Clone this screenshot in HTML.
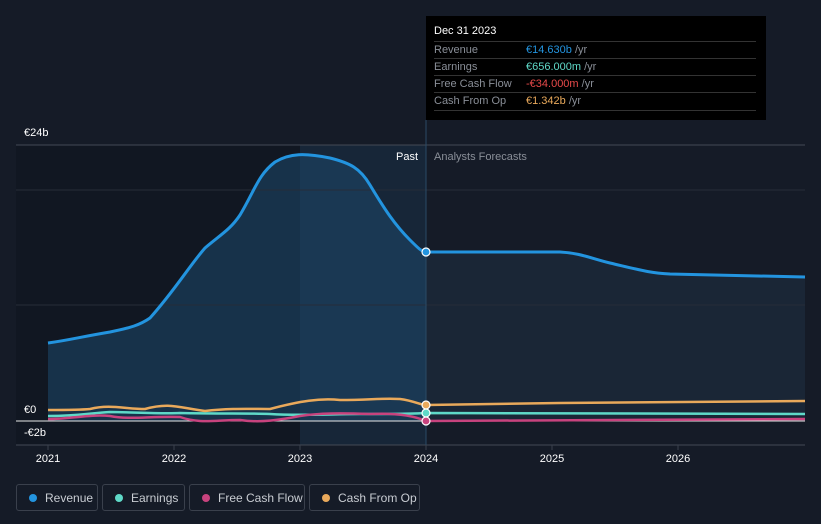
<!DOCTYPE html>
<html><head><meta charset="utf-8"><style>
body{margin:0;background:#151b27;font-family:"Liberation Sans",sans-serif;}
.wrap{position:relative;width:821px;height:524px;overflow:hidden;background:#151b27}
.tt{position:absolute;left:426px;top:16px;width:340px;height:104px;background:#000;color:#fff;font-size:11px}
.tt .h{position:absolute;left:8px;top:9px;font-size:11px}
.tt .r{position:absolute;left:8px;width:322px;border-top:1px solid #333;height:17px;line-height:17px;color:#8a8f98}
.tt .r span{position:absolute;left:92px}
.leg{position:absolute;top:484px;height:27px;border:1px solid #3a404c;border-radius:3px;color:#c8ccd2;font-size:12px;line-height:27px;box-sizing:border-box}
.leg i{position:absolute;left:12px;top:9px;width:8px;height:8px;border-radius:50%}
.leg b{font-weight:normal;position:absolute;left:28px}
</style></head><body><div class="wrap">
<svg width="821" height="524" style="position:absolute;left:0;top:0">
<rect x="16" y="145" width="284" height="300" fill="#111722"/>
<rect x="300" y="145" width="126" height="300" fill="#172638"/>
<path d="M48,343 C70,340 80,337 110,332 C130,328 140,325 150,318 C175,290 190,265 205,248 C220,235 230,230 240,215 C255,190 258,175 275,162 C290,153 305,153 330,158 C350,163 360,168 370,185 C385,210 395,225 410,240 C418,248 422,252 426,252 L426,421 L48,421 Z" fill="#1c4466" opacity="0.6"/>
<path d="M426,252 L560,252 C580,253 590,258 610,263 C640,270 650,273 670,274 L805,277 L805,421 L426,421 Z" fill="#1a2636"/>
<line x1="16" y1="145" x2="805" y2="145" stroke="#444a55"/>
<line x1="16" y1="190" x2="805" y2="190" stroke="#262c38"/>
<line x1="16" y1="305" x2="805" y2="305" stroke="#262c38"/>
<line x1="16" y1="445" x2="805" y2="445" stroke="#444a55"/>
<line x1="426" y1="120" x2="426" y2="445" stroke="#2a4a66"/>
<path d="M48,343 C70,340 80,337 110,332 C130,328 140,325 150,318 C175,290 190,265 205,248 C220,235 230,230 240,215 C255,190 258,175 275,162 C290,153 305,153 330,158 C350,163 360,168 370,185 C385,210 395,225 410,240 C418,248 422,252 426,252 L560,252 C580,253 590,258 610,263 C640,270 650,273 670,274 L805,277" fill="none" stroke="#2394df" stroke-width="3"/>
<line x1="16" y1="421" x2="805" y2="421" stroke="#e8e8e8" stroke-width="1"/>
<path d="M48,416 C80,416 90,413 110,412 C130,412 160,414 180,413 C220,414 250,413 270,414 C300,416 330,414 360,414 C390,414 410,414 426,413 L805,414" fill="none" stroke="#5fd9c8" stroke-width="2.5"/>
<path d="M48,419 C70,419 90,414 110,416 C130,420 150,416 180,417 C200,424 215,420 240,420 C260,423 280,420 300,416 C320,413 340,413 370,414 C390,413 410,414 426,421 L805,419" fill="none" stroke="#c8437e" stroke-width="2.5"/>
<path d="M48,410 C70,410 80,410 90,409 C110,404 125,409 145,409 C170,402 180,408 205,411 C230,408 250,409 270,409 C300,401 320,398 340,400 C370,400 380,398 400,399 C415,401 420,405 426,405 L560,403 L805,401" fill="none" stroke="#e9a95b" stroke-width="2.5"/>
<circle cx="426" cy="252" r="4" fill="#2394df" stroke="#fff" stroke-width="1.2"/>
<circle cx="426" cy="405" r="4" fill="#e9a95b" stroke="#fff" stroke-width="1.2"/>
<circle cx="426" cy="413" r="4" fill="#5fd9c8" stroke="#fff" stroke-width="1.2"/>
<circle cx="426" cy="421" r="4" fill="#c8437e" stroke="#fff" stroke-width="1.2"/>
<g stroke="#3a404c"><line x1="48" y1="445" x2="48" y2="450"/><line x1="174" y1="445" x2="174" y2="450"/><line x1="300" y1="445" x2="300" y2="450"/><line x1="426" y1="445" x2="426" y2="450"/><line x1="552" y1="445" x2="552" y2="450"/><line x1="678" y1="445" x2="678" y2="450"/></g>
<g font-family="Liberation Sans" font-size="11" fill="#fff">
<text x="24" y="136">€24b</text><text x="24" y="413">€0</text><text x="24" y="436">-€2b</text>
<g text-anchor="middle"><text x="48" y="462">2021</text><text x="174" y="462">2022</text><text x="300" y="462">2023</text><text x="426" y="462">2024</text><text x="552" y="462">2025</text><text x="678" y="462">2026</text></g>
<text x="418" y="160" text-anchor="end">Past</text>
<text x="434" y="160" fill="#8a8f98">Analysts Forecasts</text>
</g>
</svg>
<div class="tt"><div class="h">Dec 31 2023</div>
<div class="r" style="top:25px">Revenue<span style="color:#2394df">€14.630b <span style="position:static;color:#8a8f98">/yr</span></span></div>
<div class="r" style="top:42px">Earnings<span style="color:#5fd9c8">€656.000m <span style="position:static;color:#8a8f98">/yr</span></span></div>
<div class="r" style="top:59px">Free Cash Flow<span style="color:#e84a4a">-€34.000m <span style="position:static;color:#8a8f98">/yr</span></span></div>
<div class="r" style="top:76px;border-bottom:1px solid #333">Cash From Op<span style="color:#e9a95b">€1.342b <span style="position:static;color:#8a8f98">/yr</span></span></div>
</div>
<div class="leg" style="left:16px;width:82px"><i style="background:#2394df"></i><b>Revenue</b></div>
<div class="leg" style="left:102px;width:83px"><i style="background:#5fd9c8"></i><b>Earnings</b></div>
<div class="leg" style="left:189px;width:116px"><i style="background:#c8437e"></i><b>Free Cash Flow</b></div>
<div class="leg" style="left:309px;width:111px"><i style="background:#e9a95b"></i><b>Cash From Op</b></div>
</div></body></html>
